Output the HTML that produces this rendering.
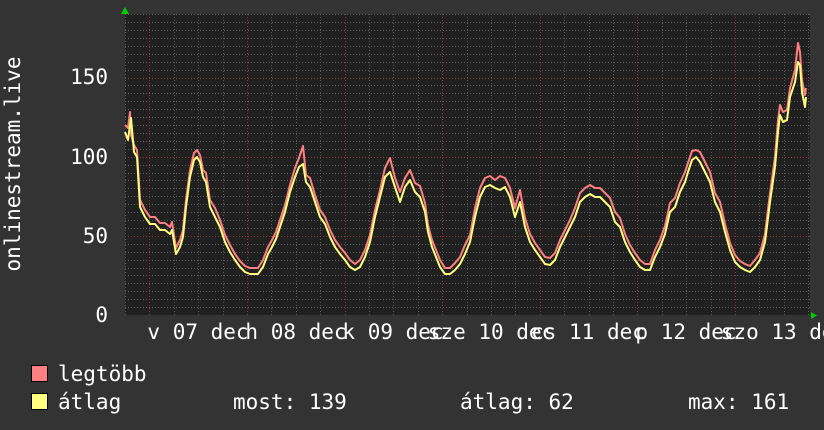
<!DOCTYPE html>
<html><head><meta charset="utf-8"><style>
html,body{margin:0;padding:0;background:#333333;}
svg{display:block;}
text{font-family:"DejaVu Sans Mono","Liberation Mono",monospace;fill:#ffffff;font-size:21px;}
</style></head><body>
<svg width="824" height="430" viewBox="0 0 824 430" xmlns="http://www.w3.org/2000/svg">
<rect width="824" height="430" fill="#333333"/>
<rect x="125" y="14" width="685" height="301" fill="#202020"/>
<g id="grid"></g>
<script>
(function(){
var ns="http://www.w3.org/2000/svg",g=document.getElementById('grid');
function line(x1,y1,x2,y2,c){var l=document.createElementNS(ns,'line');l.setAttribute('x1',x1);l.setAttribute('y1',y1);l.setAttribute('x2',x2);l.setAttribute('y2',y2);l.setAttribute('stroke',c);l.setAttribute('stroke-width','1');l.setAttribute('stroke-dasharray','1,2');g.appendChild(l);}
for(var v=5;v<=190;v+=5){var y=315-v*1.583;if(y<14)break;y=Math.round(y)+0.5;line(125,y,810,y,(v%50==0)?'#8a3a3a':'#5a5a5a');}
for(var x=125;x<=810;x+=24.4){var xx=Math.round(x)+0.5;var major=Math.abs(((x-149)/97.6)-Math.round((x-149)/97.6))<0.05;line(xx,14,xx,315,major?'#8a3a3a':'#5a5a5a');}
})();
</script>
<polyline fill="none" stroke="#ff8080" stroke-width="2" stroke-linejoin="round" points="125,125 128,128 130,112 131,135 134,145 137,150 140,200 145,210 150,217 155,217 160,223 165,223 170,227 172,222 176,248 180,240 183,230 186,200 190,170 194,153 197,150 200,155 203,170 206,173 210,200 215,208 220,220 225,235 230,245 235,254 240,261 245,266 250,268 258,268 263,260 268,247 272,240 276,232 280,220 285,205 290,185 295,168 299,158 303,146 306,175 310,178 315,195 320,210 325,217 330,230 335,240 340,247 345,253 350,260 355,264 360,260 365,250 370,235 375,210 380,190 385,168 390,158 395,178 400,192 405,178 410,170 415,183 420,186 425,203 428,225 432,240 436,250 440,260 445,268 450,268 455,263 460,257 465,245 470,235 475,208 480,188 485,178 490,176 495,180 500,176 505,178 510,188 515,208 520,190 525,218 530,234 535,243 540,250 545,257 550,258 555,253 560,240 565,230 570,220 575,208 580,193 585,188 590,185 595,188 600,188 605,193 610,198 615,212 620,218 625,234 630,245 635,253 640,260 645,264 650,264 655,250 660,240 665,226 670,203 675,198 680,183 685,172 688,163 692,151 696,150 700,152 705,162 710,172 715,193 720,202 725,224 730,243 735,255 740,261 745,264 750,266 755,260 760,253 765,234 770,193 775,157 778,120 780,105 783,112 787,110 790,88 795,70 798,43 800,52 802,80 805,95 806,88"/>
<polyline fill="none" stroke="#ffff80" stroke-width="2" stroke-linejoin="round" points="125,132 128,140 131,118 134,152 137,157 140,207 145,217 150,224 155,224 160,230 165,230 170,234 172,230 176,254 180,247 183,237 186,207 190,177 194,160 197,157 200,162 203,177 206,182 210,207 215,217 220,227 225,242 230,252 235,260 240,267 245,272 250,274 258,274 263,267 268,254 272,247 276,239 280,227 285,212 290,192 295,177 299,167 303,164 306,182 310,187 315,202 320,217 325,224 330,237 335,247 340,254 345,260 350,267 355,270 360,267 365,257 370,242 375,217 380,197 385,177 390,172 395,187 400,202 405,187 410,180 415,192 420,197 425,212 428,232 432,247 436,257 440,267 445,274 450,274 455,270 460,264 465,254 470,242 475,217 480,197 485,187 490,185 495,188 500,190 505,187 510,197 515,217 520,202 525,227 530,242 535,250 540,257 545,264 550,265 555,260 560,247 565,237 570,227 575,217 580,202 585,197 590,194 595,197 600,197 605,202 610,207 615,222 620,227 625,242 630,252 635,260 640,267 645,270 650,270 655,257 660,247 665,234 670,212 675,207 680,192 685,182 688,172 692,160 696,157 700,162 705,172 710,182 715,202 720,212 725,232 730,250 735,262 740,267 745,270 750,272 755,267 760,260 765,242 770,202 775,167 778,132 780,115 783,122 787,120 790,97 795,82 798,62 800,65 802,92 805,107 806,97"/>
<polygon points="121,14 129,14 125,7" fill="#00cc00"/>
<polygon points="811,312 811,319 817,315.5" fill="#00cc00"/>
<g text-anchor="end">
<text x="108" y="84">150</text>
<text x="108" y="164">100</text>
<text x="108" y="243">50</text>
<text x="108" y="322">0</text>
</g>
<text transform="translate(20,164) rotate(-90)" text-anchor="middle">onlinestream.live</text>
<g text-anchor="middle">
<text x="198" y="339">v 07 dec</text>
<text x="296" y="339">h 08 dec</text>
<text x="393" y="339">k 09 dec</text>
<text x="491" y="339">sze 10 dec</text>
<text x="588" y="339">cs 11 dec</text>
<text x="686" y="339">p 12 dec</text>
<text x="784" y="339">szo 13 dec</text>
</g>
<rect x="31.5" y="365.5" width="16" height="16" fill="#ff8080" stroke="#000" stroke-width="1"/>
<rect x="31.5" y="393.5" width="16" height="16" fill="#ffff80" stroke="#000" stroke-width="1"/>
<text x="58" y="381">legtöbb</text>
<text x="58" y="409">átlag</text>
<text x="233" y="409">most: 139</text>
<text x="460" y="409">átlag: 62</text>
<text x="688" y="409">max: 161</text>
</svg>
</body></html>
